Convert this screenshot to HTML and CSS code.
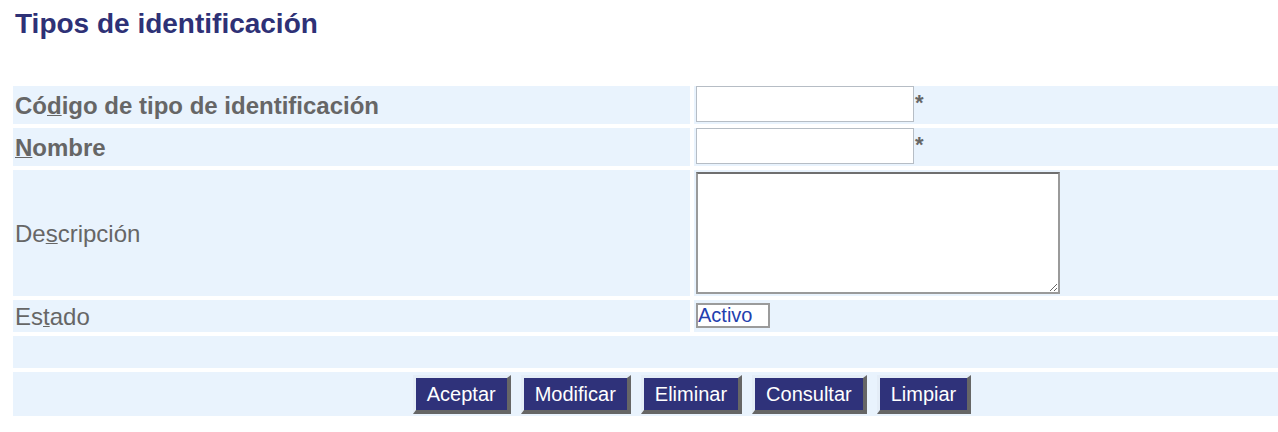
FILE: index.html
```html
<!DOCTYPE html>
<html lang="es">
<head>
<meta charset="utf-8">
<title>Tipos de identificación</title>
<link rel="stylesheet" href="styles.css">
</head>
<body>
<div class="page">
  <h1 class="title">Tipos de identificación</h1>
  <form class="form">
    <div class="cell label row-sm strong">Có<u>d</u>igo de tipo de identificación</div>
    <div class="cell value row-sm"><input class="field" type="text"><span class="req">*</span></div>

    <div class="cell label row-sm strong"><u>N</u>ombre</div>
    <div class="cell value row-sm"><input class="field" type="text"><span class="req">*</span></div>

    <div class="cell label row-lg">De<u>s</u>cripción</div>
    <div class="cell value row-lg"><textarea class="area"></textarea></div>

    <div class="cell label row-xs">Es<u>t</u>ado</div>
    <div class="cell value row-xs"><span class="status">Activo</span></div>

    <div class="cell full row-xs"></div>

    <div class="cell full row-btn actions">
      <button class="btn" type="button">Aceptar</button>
      <button class="btn" type="button">Modificar</button>
      <button class="btn" type="button">Eliminar</button>
      <button class="btn" type="button">Consultar</button>
      <button class="btn" type="button">Limpiar</button>
    </div>
  </form>
</div>
</body>
</html>
```
FILE: styles.css
```css
html, body {
  margin: 0;
  padding: 0;
  background: #ffffff;
}

body {
  font-family: "Liberation Sans", Arial, sans-serif;
}

.page {
  padding: 8px 0 0 13px;
}

.title {
  margin: 0 0 0 2px;
  font-size: 28px;
  line-height: 32px;
  font-weight: bold;
  color: #2e3176;
}

.form {
  margin-top: 46px;
  width: 1265px;
  display: grid;
  grid-template-columns: 677px 1fr;
  column-gap: 4px;
  row-gap: 4px;
}

.cell {
  background: #e9f3fd;
  box-sizing: border-box;
}

.row-sm { height: 38px; }
.row-lg { height: 126px; }
.row-xs { height: 32px; }
.row-btn { height: 44px; }

.full {
  grid-column: 1 / span 2;
}

.label {
  display: flex;
  align-items: center;
  padding: 1px 0 0 2px;
  font-size: 24px;
  color: #666666;
}

.label u {
  text-decoration-thickness: 1px;
}

.strong {
  font-weight: bold;
}

.value {
  display: flex;
  align-items: flex-start;
  padding-left: 2px;
}

.field {
  box-sizing: border-box;
  width: 218px;
  height: 36px;
  margin: 0;
  padding: 0 3px;
  border: 1px solid #b6bdc5;
  background: #ffffff;
  font-family: "Liberation Sans", Arial, sans-serif;
  font-size: 18px;
}

.req {
  margin-top: 6px;
  margin-left: 1px;
  font-size: 22px;
  line-height: 22px;
  font-weight: bold;
  color: #666666;
}

.area {
  box-sizing: border-box;
  width: 364px;
  height: 122px;
  margin: 2px 0 0 0;
  padding: 2px;
  border-style: solid;
  border-width: 2px;
  border-color: #6f6f6f #9a9a9a #9a9a9a #9a9a9a;
  background: #ffffff;
  font-family: "Liberation Sans", Arial, sans-serif;
  font-size: 18px;
}

.status {
  box-sizing: border-box;
  display: block;
  width: 74px;
  height: 25px;
  margin-top: 3px;
  border: 2px solid #9b9b9b;
  background: #ffffff;
  font-size: 20px;
  line-height: 21px;
  color: #2340ae;
}

.actions {
  display: flex;
  justify-content: center;
  align-items: center;
  gap: 10px;
  padding-left: 93px;
}

.btn {
  margin: 0;
  padding: 4px 11px;
  border-style: solid;
  border-width: 3px 4px 4px 3px;
  border-color: #e4edf7 #666666 #666666 #e4edf7;
  background: #2f327a;
  color: #ffffff;
  font-family: "Liberation Sans", Arial, sans-serif;
  font-size: 20px;
  line-height: 24px;
  cursor: pointer;
}
```
